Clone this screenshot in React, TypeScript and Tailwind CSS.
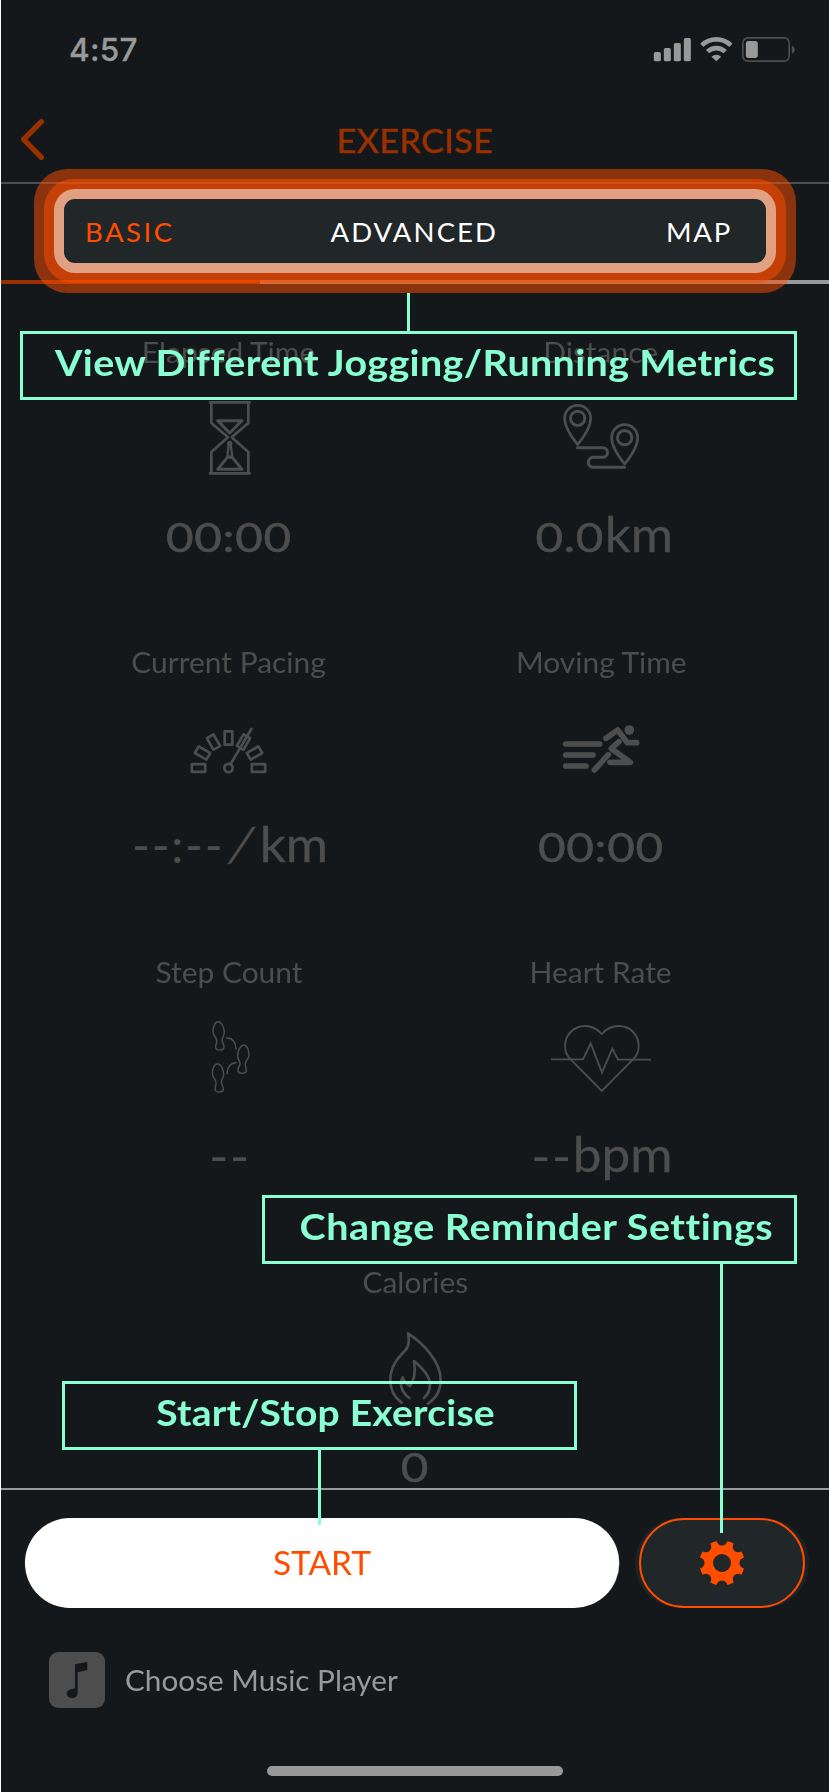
import type { ReactNode } from "react";

function Icon({ box, children }: { box: string; children: ReactNode }) {
  return (
    <svg
      viewBox={box}
      className="h-20 w-[110px] shrink-0"
      fill="none"
      stroke="currentColor"
      strokeLinecap="round"
      strokeLinejoin="round"
    >
      {children}
    </svg>
  );
}

function Hourglass() {
  return (
    <Icon box="522 354 330 240">
      <g strokeWidth="8">
        <path d="M630 367H749M630 580H749" />
        <path d="M634 370V429L684 472L634 516V576M745 370V429L695 472L745 516V576" />
        <path d="M653 422H726L689 459Z" strokeWidth="9" />
        <path d="M653 568H726L697 532H682Z" strokeWidth="9" />
        <path d="M686 494L682 530H697L692 494" strokeWidth="7" />
      </g>
      <circle cx="689" cy="490" r="8" fill="currentColor" stroke="none" />
    </Icon>
  );
}

function Route() {
  return (
    <Icon box="396 354 330 240">
      <g strokeWidth="8">
        <path d="M491 494C470 468 452 440 452 415A39 39 0 0 1 530 415C530 440 512 468 491 494Z" />
        <circle cx="491" cy="415" r="21.500" strokeWidth="9" />
        <path d="M632 552C611 526 593 498 593 473A39 39 0 0 1 671 473C671 498 653 526 632 552Z" />
        <circle cx="632" cy="473" r="21.500" strokeWidth="9" />
        <path d="M490 503H566A14.500 14.500 0 0 1 566 532H538A15 15 0 0 0 538 562H632" strokeWidth="9" />
      </g>
    </Icon>
  );
}

function Gauge() {
  return (
    <Icon box="522 234 330 240">
      <g strokeWidth="8">
        {[-90, -60, -30, 0, 30, 60, 90].map((a) => (
          <rect key={a} x="674" y="304" width="23" height="40" transform={`rotate(${a} 685.5 414)`} />
        ))}
        <path d="M692 402L754 297" />
        <circle cx="685.500" cy="414" r="12.500" />
      </g>
    </Icon>
  );
}

function Runner() {
  return (
    <Icon box="396 234 330 240">
      <g strokeWidth="17">
        <path d="M455 342H557M455 375H537M455 408H516" />
        <path d="M576 325L611 300L640 338H668" />
        <path d="M615 335L592 356L649 397H588M583 374L541 420" />
      </g>
      <circle cx="646" cy="300" r="14.500" fill="currentColor" stroke="none" />
    </Icon>
  );
}

const FOOT =
  "M654 275C664 275 673 292 673 307C673 318 666 322 666 331C666 338 673 343 672 352C671 358 666 360 660 360C653 360 647 357 647 350C647 343 651 340 650 331C649 320 639 318 639 304C639 291 645 275 654 275Z";

function Steps() {
  return (
    <Icon box="522 264 330 240">
      <g strokeWidth="4.500">
        <path d={FOOT} />
        <path d={FOOT} transform="translate(-2 126)" />
        <path d={FOOT} transform="translate(1386 70) scale(-1 1)" />
        <path d="M679 324C698 322 708 338 708 358M708 398C692 398 681 412 681 431" />
      </g>
    </Icon>
  );
}

function Heart() {
  return (
    <Icon box="396 264 330 240">
      <g strokeWidth="5.500" strokeLinecap="butt" strokeLinejoin="miter">
        <path d="M563.500 312C548 295 530 288 513 288C478 288 453 316 453 348C453 364 459 378 470 388L563.500 483L657 388C668 378 674 364 674 348C674 316 650 288 614 288C596 288 578 295 563.500 312Z" />
        <path d="M411 388H507L530 340L564 428L595 356L612 389H711" />
      </g>
    </Icon>
  );
}

function Flame() {
  return (
    <Icon box="480 444 330 240">
      <g strokeWidth="8">
        <path d="M605 668C582 652 571 625 571 600C571 560 592 535 617 510C628 498 628 480 624 460C670 490 722 545 722 600C722 632 708 655 684 671" />
        <path d="M628 654C602 636 598 608 608 592C612 604 618 612 630 618C644 600 646 570 642 543C668 565 690 590 690 612C690 630 684 644 672 654" />
      </g>
    </Icon>
  );
}

function Gear() {
  return (
    <svg viewBox="-24 -24 48 48" className="size-12">
      <mask id="gear">
        <circle r="22.600" fill="#fff" />
        <circle r="9" fill="#000" />
        {[0, 45, 90, 135, 180, 225, 270, 315].map((a) => (
          <circle key={a} cy="-22.800" r="5.400" fill="#000" transform={`rotate(${a})`} />
        ))}
      </mask>
      <rect x="-24" y="-24" width="48" height="48" fill="#ff4d00" mask="url(#gear)" />
    </svg>
  );
}

function Metric({
  label,
  icon,
  children,
  className = "",
}: {
  label: string;
  icon: ReactNode;
  children: ReactNode;
  className?: string;
}) {
  return (
    <div className={`flex h-[310px] flex-col items-center whitespace-nowrap ${className}`}>
      <div className="scale-x-[1.05] text-[28.500px] leading-10">{label}</div>
      <div className="mt-[26px] flex">{icon}</div>
      <div className="mt-[26px] flex h-[60px] items-baseline text-[48px] leading-[60px] before:content-['\200b']">
        {children}
      </div>
    </div>
  );
}

function Digits({ children }: { children: ReactNode }) {
  return (
    <span className="inline-block scale-x-[1.19] text-[40px] tracking-[0.600px] [-webkit-text-stroke:0.500px_currentColor]">
      {children}
    </span>
  );
}

function Unit({ children }: { children: ReactNode }) {
  return (
    <span className="inline-block scale-x-[1.07] [-webkit-text-stroke:0.300px_currentColor]">{children}</span>
  );
}

function Callout({ className, children }: { className: string; children: ReactNode }) {
  return (
    <div
      className={`absolute flex h-[69px] items-center justify-center border-[3px] border-[#8affd2] pb-2 pl-[13px] text-[37px] font-bold whitespace-nowrap text-[#8affd2] ${className}`}
    >
      {children}
    </div>
  );
}

export default function App() {
  return (
    <div className="relative flex h-[1792px] w-[829px] flex-col overflow-hidden border-l border-white bg-[#14181b] font-['Lato',sans-serif] text-[#4d4d4d]">
      <div className="flex h-[100px] items-center justify-between pr-[33px] pl-[68px]">
        <span className="font-['Inter',sans-serif] text-[31.500px] font-medium tracking-[0.300px] text-[#999] [-webkit-text-stroke:0.300px_currentColor]">
          4:57
        </span>
        <svg viewBox="718 105 428 90" className="h-[30px] w-[143px]" fill="#999">
          <rect x="720" y="156" width="21" height="28" rx="5" />
          <rect x="750" y="144" width="21" height="40" rx="5" />
          <rect x="780" y="129" width="21" height="55" rx="5" />
          <rect x="810" y="114" width="21" height="70" rx="5" />
          <g fill="none" stroke="#999" strokeWidth="14">
            <path d="M864 136A62 62 0 0 1 951 136" />
            <path d="M881 155A38 38 0 0 1 934 155" />
          </g>
          <path d="M893 170A21 21 0 0 1 922 170L907.500 184Z" />
          <rect x="987" y="113.500" width="139" height="70" rx="15" fill="none" stroke="#4d4d4d" strokeWidth="5" />
          <rect x="996" y="123" width="36" height="51" rx="8" />
          <path d="M1134 136Q1143 141 1143 149T1134 162Z" fill="#4d4d4d" />
        </svg>
      </div>

      <div className="grid h-[84px] grid-cols-[60px_1fr_60px] border-b-2 border-[#4d4f50] text-[#993000]">
        <svg viewBox="60 354 75 129" className="mt-[18px] ml-[19px] h-[43px] w-[25px]" fill="none">
          <path
            d="M124 365L71 418L124 472"
            stroke="currentColor"
            strokeWidth="16"
            strokeLinecap="round"
            strokeLinejoin="round"
          />
        </svg>
        <h1 className="scale-x-[1.075] pt-5 text-center text-[32px] leading-[42px] font-medium tracking-[0.200px] [-webkit-text-stroke:0.300px_currentColor]">
          EXERCISE
        </h1>
      </div>

      <div className="flex h-[100px] shrink-0 flex-col">
        <div className="relative z-10 mt-[15px] mr-[63px] ml-[63px] flex h-16 shrink-0 items-center justify-between rounded-[11px] bg-[#212629] pt-0.5 pr-[34px] pl-[21px] text-[27.500px] tracking-[1.800px] text-white shadow-[0_0_0_10px_rgba(255,255,255,0.5),0_0_0_20px_rgba(255,77,0,0.5),0_0_0_30px_rgba(255,77,0,0.5)]">
          <span className="tracking-[2.500px] text-[#ff4d00]">BASIC</span>
          <span className="mr-[12px] tracking-[2.100px]">ADVANCED</span>
          <span>MAP</span>
        </div>
        <div className="mt-[17px] flex h-1">
          <div className="w-[259px] bg-[#993000]" />
          <div className="flex-1 bg-[#999]" />
        </div>
      </div>

      <div className="grid h-[1204px] shrink-0 grid-cols-[372px_372px] content-start pt-[48px] pl-[42px]">
        <Metric label="Elapsed Time" icon={<Hourglass />}>
          <Digits>00:00</Digits>
        </Metric>
        <Metric label="Distance" icon={<Route />}>
          <span className="mr-[9px] ml-2.5">
            <Digits>0.0</Digits>
          </span>
          <Unit>km</Unit>
        </Metric>
        <Metric label="Current Pacing" icon={<Gauge />}>
          <span className="relative top-px tracking-[1.800px]">--:--</span>
          <span className="mr-[9px] ml-[7px] inline-block -skew-x-[15deg]">/</span>
          <Unit>km</Unit>
        </Metric>
        <Metric label="Moving Time" icon={<Runner />}>
          <Digits>00:00</Digits>
        </Metric>
        <Metric label="Step Count" icon={<Steps />}>
          <span className="relative top-0.5 -mr-px scale-x-[1.1] tracking-[1px]">--</span>
        </Metric>
        <Metric label="Heart Rate" icon={<Heart />}>
          <span className="relative top-0.5 mr-[5px] scale-x-[1.1] tracking-[1px]">--</span>
          <Unit>bpm</Unit>
        </Metric>
        <Metric label="Calories" icon={<Flame />} className="col-span-2">
          <Digits>0</Digits>
        </Metric>
      </div>

      <div className="flex h-[148px] shrink-0 gap-4 border-t-2 border-[#999] pt-7 pl-6">
        <button className="h-[90px] w-[594px] rounded-[45px] bg-white text-[32px] text-[#ff4d00] shadow-[-2px_0_0_-1px_#212629,1px_0_0_-0.500px_#999]">
          <span className="inline-block scale-x-[1.045]">START</span>
        </button>
        <div className="flex h-[90px] w-[174px] justify-center rounded-[45px] bg-[#1d2225]">
          <button className="flex w-[166px] items-center justify-center rounded-[45px] border-2 border-[#ff4d00] bg-[#212629]">
            <Gear />
          </button>
        </div>
      </div>

      <div className="flex items-center gap-5 pt-4 pl-12">
        <svg viewBox="147 876 168 168" className="size-14">
          <rect x="147" y="876" width="168" height="168" rx="28" fill="#4d4d4d" />
          <path
            d="M225 913L262 906V930L233 937V998C233 1008 226 1014 215 1014C206 1014 200 1008 200 1000C200 992 210 988 225 985Z"
            fill="#14181b"
          />
        </svg>
        <span className="origin-left scale-x-[1.062] text-[28px] text-[#999]">Choose Music Player</span>
      </div>
      <div className="mt-[58px] ml-[266px] h-2.5 w-[296px] shrink-0 rounded-full bg-[#999]" />

      <div className="absolute top-[293px] left-[406px] h-[38px] w-[3px] bg-[#8affd2]" />
      <Callout className="top-[331px] left-[19px] w-[777px]">
        <span className="scale-x-[1.065] tracking-[0.350px]">View Different Jogging/Running Metrics</span>
      </Callout>
      <div className="absolute top-[1264px] left-[719px] h-[269px] w-[3px] bg-[#8affd2]" />
      <Callout className="top-[1195px] left-[261px] w-[535px]">
        <span className="scale-x-[1.065] tracking-[0.500px]">Change Reminder Settings</span>
      </Callout>
      <div className="absolute top-[1450px] left-[317px] h-[75px] w-[3px] bg-[#8affd2]" />
      <Callout className="top-[1381px] left-[61px] w-[515px]">
        <span className="scale-x-[1.055] tracking-[0.200px]">Start/Stop Exercise</span>
      </Callout>
    </div>
  );
}
